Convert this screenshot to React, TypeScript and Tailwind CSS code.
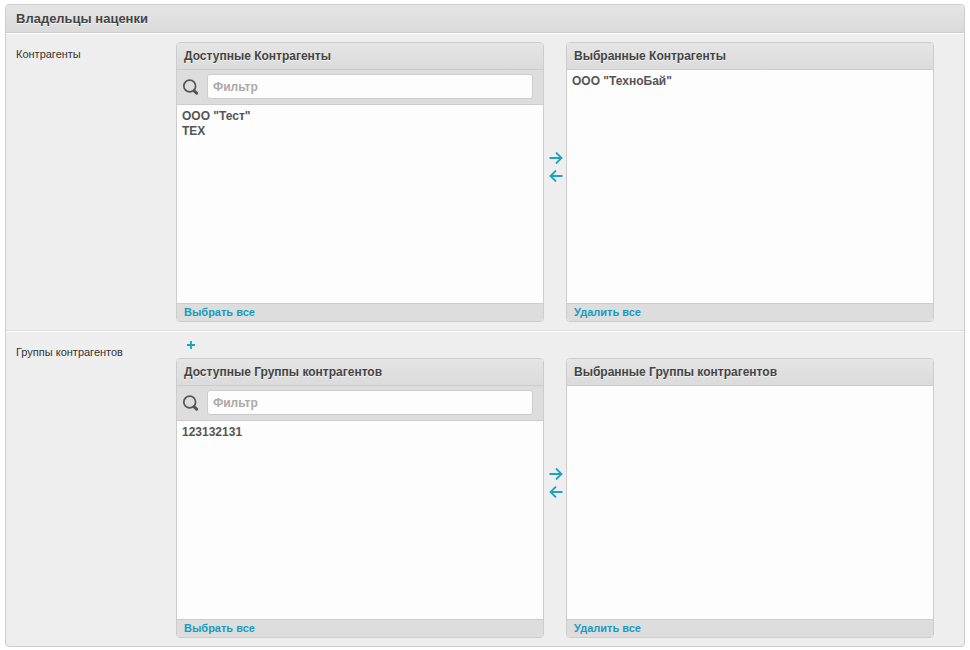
interface PanelProps {
  id: string;
  title: string;
  items: string[];
  action: string;
  filter?: boolean;
}

interface SelectorProps {
  name: string;
  label: string;
  available: string[];
  chosen: string[];
}

function SearchIcon() {
  return (
    <svg className="size-4 shrink-0" viewBox="0 0 16 16" fill="none" stroke="#555" aria-hidden="true">
      <circle cx="6.7" cy="7" r="5.9" strokeWidth="1.7" />
      <path d="M11.2 11.9L13.6 14.2" strokeWidth="3" strokeLinecap="round" />
    </svg>
  );
}

function Arrow({ left = false, label }: { left?: boolean; label: string }) {
  return (
    <button type="button" aria-label={label} className="flex h-[18px] w-full items-center justify-end pr-[3px] text-[#1ba3c0]">
      <svg className="h-3 w-3.5" viewBox="0 0 14 12" fill="none" stroke="currentColor" strokeWidth="1.8">
        <path d={left ? 'M13.5 6H1.5M7 0.5L1.5 6L7 11.5' : 'M0.5 6H12.5M7 0.5L12.5 6L7 11.5'} />
      </svg>
    </button>
  );
}

function Panel({ id, title, items, action, filter = false }: PanelProps) {
  return (
    <div className="flex h-[280px] min-w-0 flex-col overflow-hidden rounded-[4px] border border-[#ccc] bg-[#fdfdfd] font-bold">
      <h3
        id={`${id}-title`}
        className="h-[27px] shrink-0 border-b border-[#ccc] bg-linear-to-b from-[#e5e5e5] to-[#dbdbdb] px-[7px] text-[12px] leading-[26px] text-[#444] text-shadow-[0_1px_0_#f5f5f5]"
      >
        {title}
      </h3>
      {filter && (
        <div className="flex h-[35px] shrink-0 items-start gap-2 border-b border-[#ccc] bg-[#ddd] pt-1 pr-2.5 pl-1.5">
          <span className="flex h-[25px] items-center">
            <SearchIcon />
          </span>
          <input
            type="text"
            placeholder="Фильтр"
            aria-label={`Фильтр: ${title}`}
            className="h-[25px] min-w-0 flex-1 rounded-[3px] border border-[#ccc] bg-[#fdfdfd] px-[5px] text-[12px] text-[#444] outline-none placeholder:text-[#aaa]"
          />
        </div>
      )}
      <select
        multiple
        aria-labelledby={`${id}-title`}
        className="min-h-0 w-full flex-1 appearance-none overflow-auto bg-[#fdfdfd] px-[5px] py-[3px] text-[12px] text-[#555] outline-none"
      >
        {items.map((item) => (
          <option key={item} className="flex h-[15px] items-center p-0 font-bold">
            {item}
          </option>
        ))}
      </select>
      <div className="flex h-[18px] shrink-0 items-start border-t border-[#ccc] bg-[#ddd] px-[7px]">
        <a href="#" className="text-[11px] leading-4 text-[#159bc2]">
          {action}
        </a>
      </div>
    </div>
  );
}

function Selector({ name, label, available, chosen }: SelectorProps) {
  return (
    <div className="grid grid-cols-[1fr_22px_1fr]">
      <Panel id={`${name}-from`} title={`Доступные ${label}`} items={available} action="Выбрать все" filter />
      <div className="flex flex-col justify-center pb-[30px]">
        <Arrow label="Выбрать" />
        <Arrow left label="Удалить" />
      </div>
      <Panel id={`${name}-to`} title={`Выбранные ${label}`} items={chosen} action="Удалить все" />
    </div>
  );
}

export default function App() {
  return (
    <main className="bg-white px-[5px] py-1 font-['Liberation_Sans',Arial,sans-serif]">
      <section className="overflow-hidden rounded-[4px] border border-[#ccc] bg-[#eee]">
        <h2 className="h-7 border-b border-[#ccc] bg-linear-to-b from-[#e5e5e5] to-[#dbdbdb] px-2.5 text-[13px] leading-[27px] font-bold text-[#444] text-shadow-[0_1px_0_#f5f5f5]">
          Владельцы наценки
        </h2>

        <div className="flex border-t border-b border-t-white border-b-[#ddd] py-2 pr-[30px] pl-2.5">
          <div className="w-40 shrink-0 pt-1 text-[11px] leading-4 text-[#333]">Контрагенты</div>
          <div className="min-w-0 flex-1">
            <Selector name="owners" label="Контрагенты" available={['ООО "Тест"', 'ТЕХ']} chosen={['ООО "ТехноБай"']} />
          </div>
        </div>

        <div className="flex border-t border-t-white py-2 pr-[30px] pl-2.5">
          <div className="w-40 shrink-0 pt-1 text-[11px] leading-4 text-[#333]">Группы контрагентов</div>
          <div className="min-w-0 flex-1">
            <button type="button" aria-label="Добавить" className="flex h-[18px] items-start px-2.5 text-[#1ba3c0]">
              <svg className="size-2.5" viewBox="0 0 10 10" fill="none" stroke="currentColor" strokeWidth="1.8">
                <path d="M5 1V9M1 5H9" />
              </svg>
            </button>
            <Selector name="groups" label="Группы контрагентов" available={['123132131']} chosen={[]} />
          </div>
        </div>
      </section>
    </main>
  );
}
